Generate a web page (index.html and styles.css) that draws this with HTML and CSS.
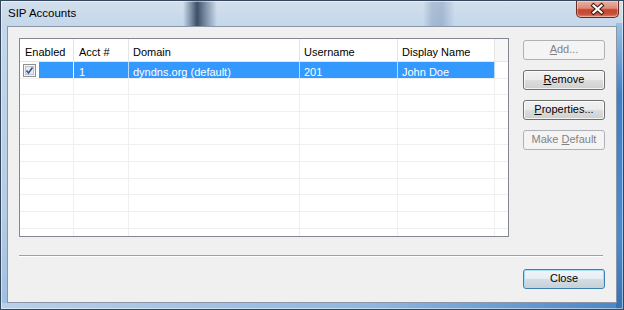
FILE: index.html
```html
<!DOCTYPE html>
<html>
<head>
<meta charset="utf-8">
<link rel="stylesheet" href="styles.css">
</head>
<body>
<div class="window">
  <div class="titlebar">
    <span class="title">SIP Accounts</span>
    <div class="closex">
      <svg width="43" height="17" viewBox="0 0 43 17">
        <path d="M17.5 4.5 L25.5 11.5 M25.5 4.5 L17.5 11.5" stroke="#3a1a14" stroke-width="4.2" stroke-linecap="square" fill="none"/>
        <path d="M17.5 4.5 L25.5 11.5 M25.5 4.5 L17.5 11.5" stroke="#ffffff" stroke-width="2.2" stroke-linecap="square" fill="none"/>
      </svg>
    </div>
  </div>
  <div class="client">
    <div class="main">
      <div class="listview">
        <div class="row hdr">
          <div class="c">Enabled</div>
          <div class="c">Acct #</div>
          <div class="c">Domain</div>
          <div class="c">Username</div>
          <div class="c">Display Name</div>
          <div class="c tail"></div>
        </div>
        <div class="body">
          <div class="row r sel">
            <div class="c first">
              <span class="chk">
                <svg width="13" height="13" viewBox="0 0 13 13">
                  <rect x="0.5" y="0.5" width="12" height="12" fill="#f4f4f4" stroke="#8e8f8f"/>
                  <rect x="2.5" y="2.5" width="8" height="8" fill="#e6ebf2" stroke="#b9c3d1"/>
                  <path d="M3.5 6.5 L5.5 9 L9.5 3.5" stroke="#3c4f8c" stroke-width="1.6" fill="none"/>
                </svg>
              </span>
              <span class="fill"></span>
            </div>
            <div class="c">1</div>
            <div class="c">dyndns.org (default)</div>
            <div class="c">201</div>
            <div class="c">John Doe</div>
            <div class="c tail"></div>
          </div>
          <div class="row r"><div class="c"></div><div class="c"></div><div class="c"></div><div class="c"></div><div class="c"></div><div class="c tail"></div></div>
          <div class="row r"><div class="c"></div><div class="c"></div><div class="c"></div><div class="c"></div><div class="c"></div><div class="c tail"></div></div>
          <div class="row r"><div class="c"></div><div class="c"></div><div class="c"></div><div class="c"></div><div class="c"></div><div class="c tail"></div></div>
          <div class="row r"><div class="c"></div><div class="c"></div><div class="c"></div><div class="c"></div><div class="c"></div><div class="c tail"></div></div>
          <div class="row r"><div class="c"></div><div class="c"></div><div class="c"></div><div class="c"></div><div class="c"></div><div class="c tail"></div></div>
          <div class="row r"><div class="c"></div><div class="c"></div><div class="c"></div><div class="c"></div><div class="c"></div><div class="c tail"></div></div>
          <div class="row r"><div class="c"></div><div class="c"></div><div class="c"></div><div class="c"></div><div class="c"></div><div class="c tail"></div></div>
          <div class="row r"><div class="c"></div><div class="c"></div><div class="c"></div><div class="c"></div><div class="c"></div><div class="c tail"></div></div>
          <div class="row r"><div class="c"></div><div class="c"></div><div class="c"></div><div class="c"></div><div class="c"></div><div class="c tail"></div></div>
          <div class="row r"><div class="c"></div><div class="c"></div><div class="c"></div><div class="c"></div><div class="c"></div><div class="c tail"></div></div>
        </div>
      </div>
      <div class="buttons">
        <div class="btn disabled"><u>A</u>dd...</div>
        <div class="btn"><u>R</u>emove</div>
        <div class="btn"><u>P</u>roperties...</div>
        <div class="btn disabled">Make <u>D</u>efault</div>
      </div>
    </div>
    <div class="sep"></div>
    <div class="footer">
      <div class="btn default">Close</div>
    </div>
  </div>
</div>
</body>
</html>
```
FILE: styles.css
```css
* { box-sizing: border-box; }
html, body { margin: 0; padding: 0; }
body {
  width: 624px;
  height: 310px;
  overflow: hidden;
  font-family: "Liberation Sans", Arial, sans-serif;
  font-size: 11px;
  color: #000;
}
.window {
  width: 624px;
  height: 310px;
  border: 1px solid #34475d;
  display: flex;
  flex-direction: column;
  background:
    linear-gradient(to right, rgba(0,0,0,0) 182px, rgba(60,82,110,.55) 190px, rgba(35,55,80,.85) 196px, rgba(50,72,100,.55) 204px, rgba(0,0,0,0) 216px, rgba(0,0,0,0) 422px, rgba(90,120,160,.3) 431px, rgba(90,120,160,.35) 441px, rgba(0,0,0,0) 454px) no-repeat 0 0 / 100% 25px,
    linear-gradient(to bottom, #9cc0e6, #3e80c8 25%, #4a8bd0 75%, #3572b4) no-repeat right 0 top 22px / 7px calc(100% - 22px),
    linear-gradient(to right, #b9d0e8, #8fb6de 60%, #4a86c6) no-repeat left 0 bottom 0 / 100% 6px,
    linear-gradient(to bottom, #d3dfeb 0, #c4d7eb 25px, #b4cce4 70%, #9fbfe0 100%);
  box-shadow: inset 0 0 0 1px rgba(255,255,255,.5);
}
.titlebar {
  height: 25px;
  display: flex;
  justify-content: space-between;
  align-items: flex-start;
}
.title {
  padding: 5px 0 0 7px;
  font-size: 11.5px;
  line-height: 15px;
  color: #000;
}
.closex {
  width: 43px;
  height: 17px;
  margin-right: 4px;
  border: 1px solid #6b2b22;
  border-top: none;
  border-radius: 0 0 5px 5px;
  background: linear-gradient(to bottom, #eab0a2 0%, #dc8c79 45%, #c6462d 55%, #c9503a 82%, #e58a70 100%);
  box-shadow: inset 0 0 0 1px rgba(255,255,255,.35);
  overflow: hidden;
  position: relative;
}
.closex svg { position: absolute; left: -1px; top: 0; }
.client {
  flex: 1;
  margin: 0 6px 6px 6px;
  border: 1px solid #8a96a6;
  background: #f0f0f0;
  padding: 11px 11px 13px 11px;
  display: flex;
  flex-direction: column;
}
.main {
  display: flex;
  gap: 14px;
}
.listview {
  width: 490px;
  height: 199px;
  border: 1px solid #828790;
  background: #fff;
  overflow: hidden;
}
.row {
  display: grid;
  grid-template-columns: 54px 55px 171px 98px 97px 1fr;
}
.hdr {
  height: 23px;
  border-bottom: 1px solid #e5e5e5;
}
.hdr .c {
  padding: 4px 0 0 5px;
  line-height: 18px;
  border-right: 1px solid #e5e5e5;
  white-space: nowrap;
  color: #000;
}
.hdr .c:nth-child(n+3) { padding-left: 4px; }
.hdr .tail { border-right: none; background: #f7f7f7; }
.body { overflow: hidden; }
.r {
  height: 16.67px;
  border-bottom: 1px solid #efefef;
}
.r .c {
  border-right: 1px solid #efefef;
  padding: 4px 0 0 5px;
  line-height: 12px;
  white-space: nowrap;
  overflow: hidden;
}
.r .c:nth-child(n+3) { padding-left: 4px; }
.r .tail { border-right: none; }
.sel .c {
  background: #3399ff;
  color: #fff;
  border-right-color: rgba(255,255,255,.65);
}
.sel .c.tail { background: #fff; }
.sel .c.first {
  background: #fff;
  padding: 0;
  display: flex;
  border-right-color: rgba(255,255,255,.65);
}
.chk {
  width: 19px;
  padding: 2px 0 0 3px;
  display: block;
}
.chk svg { display: block; }
.fill { flex: 1; background: #3399ff; }
.buttons {
  width: 82px;
  display: flex;
  flex-direction: column;
  gap: 10px;
  padding-top: 2px;
}
.btn {
  width: 82px;
  height: 20px;
  border: 1px solid #707070;
  border-radius: 3px;
  background: linear-gradient(to bottom, #f2f2f2 0%, #ebebeb 48%, #dddddd 52%, #cfcfcf 100%);
  box-shadow: inset 0 0 0 1px rgba(255,255,255,.75);
  text-align: center;
  line-height: 17px;
  font-size: 11px;
  color: #000;
}
.btn u { text-decoration: underline; text-underline-offset: 1px; }
.btn.disabled {
  border-color: #adb2b5;
  background: #f4f4f4;
  box-shadow: none;
  color: #838383;
}
.btn.default {
  border-color: #3c7fb1;
  box-shadow: inset 0 0 0 1px #a9dcf5;
  background: linear-gradient(to bottom, #f0f6fa 0%, #e6eef4 48%, #d4dde4 52%, #c6d0d8 100%);
}
.sep {
  margin-top: 18px;
  margin-right: 2px;
  height: 2px;
  border-top: 1px solid #a0a0a0;
  border-bottom: 1px solid #ffffff;
}
.footer {
  margin-top: 12px;
  display: flex;
  justify-content: flex-end;
}
```
